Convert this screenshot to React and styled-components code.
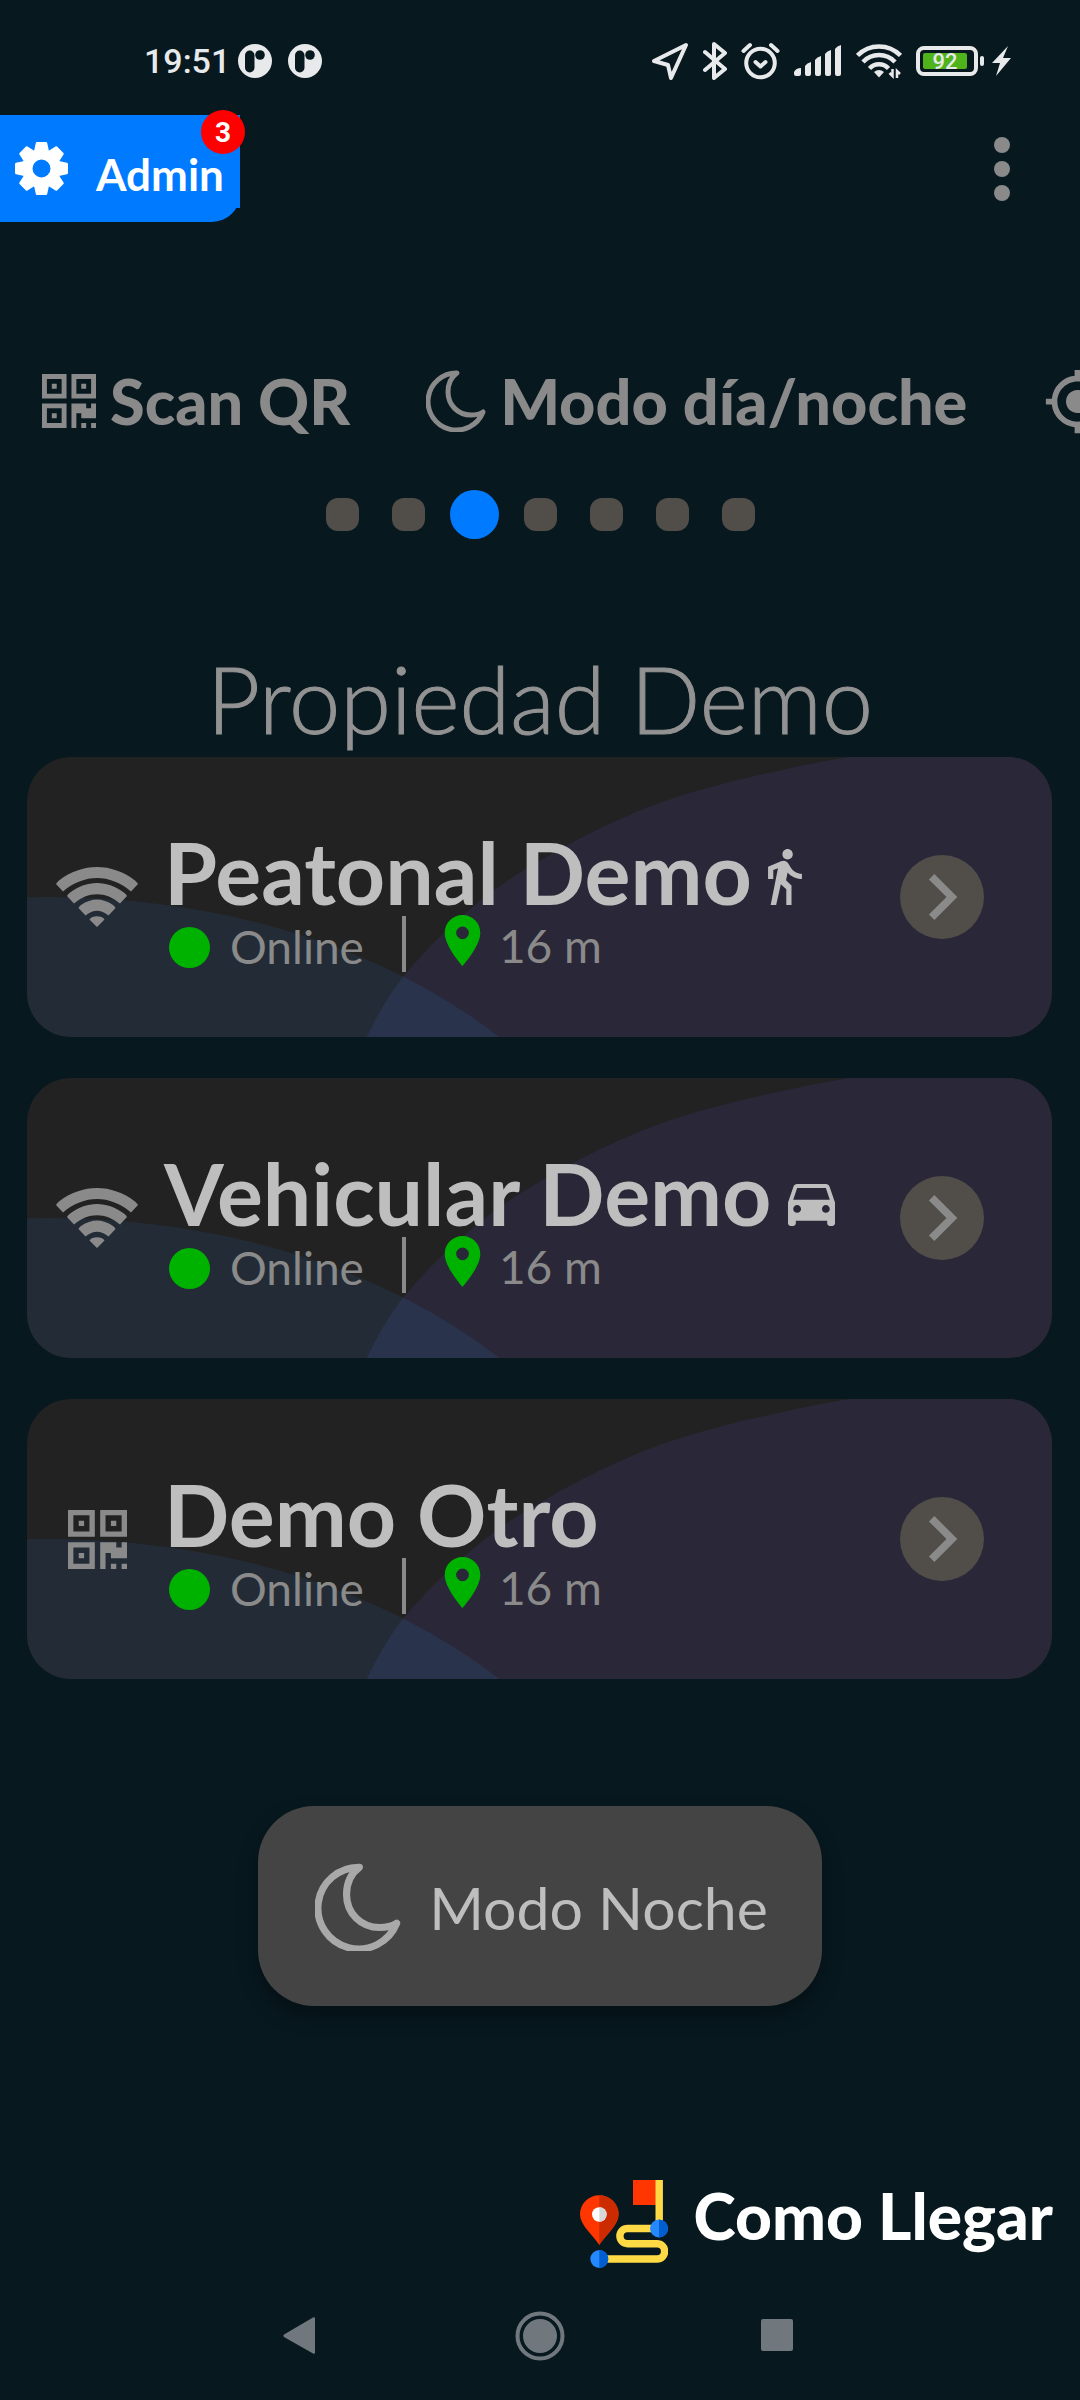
import { useState } from 'react';
import styled, { createGlobalStyle } from 'styled-components';
import {
  MdChevronRight,
  MdDirectionsCar,
  MdDirectionsWalk,
  MdLocationOn,
  MdMyLocation,
} from 'react-icons/md';

const GlobalStyle = createGlobalStyle`
  * {
    box-sizing: border-box;
  }
  body {
    margin: 0;
    background: #07181f;
    font-family: Lato, 'Open Sans', sans-serif;
  }
  button {
    padding: 0;
    border: none;
    background: none;
    color: inherit;
    font: inherit;
    cursor: pointer;
  }
  svg {
    display: block;
    flex: none;
  }
`;

const Page = styled.div`
  display: flex;
  flex-direction: column;
  min-height: 100vh;
  overflow: hidden;
  color: #8a8a8a;
`;

/* status bar */
const StatusBar = styled.div`
  display: flex;
  align-items: center;
  justify-content: space-between;
  height: 115px;
  padding: 6px 69px 0 144px;
  color: #e8e9ea;
  font-family: Roboto, sans-serif;
`;

const StatusGroup = styled.div`
  display: flex;
  align-items: center;
  gap: ${({ $gap }) => $gap}px;
`;

const Clock = styled.time`
  font-size: 34px;
  font-weight: 500;
`;

const Battery = styled.div`
  display: flex;
  align-items: center;
  gap: 2px;
`;

const BatteryBody = styled.div`
  width: 62px;
  height: 30px;
  padding: 3px;
  border: 4px solid #e8e9ea;
  border-radius: 8px;
`;

const BatteryLevel = styled.div`
  height: 16px;
  border-radius: 2px;
  background: #4fb31b;
  font-size: 22px;
  font-weight: 500;
  line-height: 18px;
  text-align: center;
`;

const BatteryTip = styled.span`
  width: 4px;
  height: 10px;
  margin-right: 6px;
  border-radius: 2px;
  background: #e8e9ea;
`;

/* header */
const Header = styled.header`
  display: flex;
  align-items: center;
  justify-content: space-between;
  padding-right: 70px;
`;

const AdminButton = styled.button`
  position: relative;
  display: flex;
  align-items: center;
  gap: 28px;
  width: 240px;
  height: 107px;
  padding: 0 14px 0 15px;
  border-radius: 0 0 28px 0;
  background: #007bff;
  color: #fff;
  font-size: 44px;
  font-weight: 700;

  &::after {
    content: '';
    position: absolute;
    right: 0;
    bottom: 14px;
    width: 10px;
    height: 20px;
    background: #007bff;
  }
`;

const AdminLabel = styled.span`
  padding-top: 10px;
`;

const Badge = styled.span`
  position: absolute;
  top: -5px;
  right: -5px;
  width: 44px;
  height: 44px;
  border-radius: 50%;
  background: #ff0000;
  font-family: Roboto, sans-serif;
  font-size: 28px;
  line-height: 46px;
  text-align: center;
`;

const MoreButton = styled.button`
  display: flex;
  flex-direction: column;
  gap: 8px;

  span {
    width: 16px;
    height: 16px;
    border-radius: 50%;
    background: #8a8a8a;
  }
`;

/* shortcuts */
const Shortcuts = styled.nav`
  display: flex;
  gap: 76px;
  height: 80px;
  margin-top: 139px;
  padding-left: 42px;
  overflow: hidden;
`;

const Shortcut = styled.button`
  display: flex;
  flex: none;
  align-items: center;
  gap: 14px;
  font-size: 63px;
  font-weight: 900;
  line-height: 80px;
  white-space: nowrap;
`;

const Pager = styled.div`
  display: flex;
  align-items: center;
  justify-content: center;
  gap: 33px;
  height: 49px;
  margin-top: 49px;
`;

const PagerDot = styled.button`
  width: ${({ $active }) => ($active ? 49 : 33)}px;
  height: ${({ $active }) => ($active ? 49 : 33)}px;
  margin: 0 ${({ $active }) => ($active ? -8 : 0)}px;
  border-radius: ${({ $active }) => ($active ? '50%' : '12px')};
  background: ${({ $active }) => ($active ? '#007bff' : '#514e49')};
`;

/* property */
const Title = styled.h1`
  margin: 105px 0 3px;
  color: #929292;
  font-size: 92px;
  font-weight: 300;
  line-height: 110px;
  text-align: center;
  -webkit-text-stroke: 1px #929292;
`;

const CardList = styled.ul`
  display: flex;
  flex-direction: column;
  gap: 41px;
  margin: 0;
  padding: 0 28px 0 27px;
  list-style: none;
`;

const Card = styled.li`
  position: relative;
  display: flex;
  align-items: center;
  height: 280px;
  padding: 0 68px 0 27px;
  border-radius: 44px;
  background: #222;
  overflow: hidden;
`;

const CardBackdrop = styled.svg`
  position: absolute;
  inset: 0;
  width: 100%;
  height: 100%;
`;

const CardIcon = styled.div`
  position: relative;
  display: flex;
  justify-content: center;
  width: 86px;
`;

const CardBody = styled.div`
  position: relative;
  flex: 1;
  padding: 6px 0 0 24px;
`;

const CardTitle = styled.h2`
  display: flex;
  align-items: baseline;
  gap: 16px;
  margin: 0;
  color: #bebebe;
  font-size: 86px;
  font-weight: 700;
  line-height: 86px;
  white-space: nowrap;
`;

const TypeIcon = styled.span`
  svg {
    width: ${({ $width }) => $width}px;
    height: ${({ $height }) => $height}px;
  }
`;

const Meta = styled.div`
  display: flex;
  align-items: center;
  height: 56px;
  margin-top: 1px;
  padding-left: 5px;
  font-size: 46px;
  line-height: 46px;
`;

const OnlineState = styled.span`
  display: flex;
  align-items: center;
  gap: 20px;
  padding-top: 7px;

  &::before {
    content: '';
    width: 41px;
    height: 41px;
    border-radius: 50%;
    background: #00b200;
  }
`;

const Distance = styled.span`
  display: flex;
  align-items: center;
  gap: 6px;
  height: 56px;
  margin-left: 38px;
  padding: 4px 0 0 26px;
  border-left: 4px solid #8a8a8a;

  svg {
    margin-bottom: 10px;
    color: #00b200;
  }
`;

const GoButton = styled.button`
  position: relative;
  display: flex;
  align-items: center;
  justify-content: center;
  width: 84px;
  height: 84px;
  border-radius: 50%;
  background: #514e49;
`;

const NightButton = styled.button`
  display: flex;
  align-items: center;
  align-self: center;
  gap: 28px;
  height: 200px;
  margin-top: 127px;
  padding: 2px 54px 0 57px;
  border-radius: 56px;
  background: #444;
  box-shadow: 0 10px 20px rgba(0, 0, 0, 0.3);
  color: #bebebe;
  font-size: 59px;

  svg {
    color: #a9a9a9;
  }
`;

const RouteLink = styled.a`
  display: flex;
  align-items: flex-start;
  align-self: flex-end;
  gap: 26px;
  margin: 174px 27px 0 0;
  color: #fff;
  font-size: 64px;
  font-weight: 900;
  line-height: 72px;
  text-decoration: none;
`;

const SystemNav = styled.nav`
  display: flex;
  justify-content: center;
  gap: 188px;
  margin-top: 43px;
  padding-bottom: 38px;
  color: #70787d;
`;

const NotificationIcon = () => (
  <svg width="34" height="34" viewBox="0 0 34 34">
    <circle cx="17" cy="17" r="17" fill="#e8e9ea" />
    <rect x="7" y="6.5" width="9.500" height="22" rx="4.700" fill="#07181f" />
    <circle cx="22" cy="11" r="4.800" fill="#07181f" />
  </svg>
);

const NavigationIcon = () => (
  <svg width="38" height="38" viewBox="0 0 38 38" fill="none" stroke="currentColor" strokeWidth="4" strokeLinejoin="round">
    <path d="M35 3 3 19l14 4 3 13z" />
  </svg>
);

const BluetoothIcon = () => (
  <svg width="24" height="38" viewBox="0 0 24 38" fill="none" stroke="currentColor" strokeWidth="4" strokeLinejoin="round" strokeLinecap="round">
    <path d="M2 10 22 27 11 36V2l11 9L2 28" />
  </svg>
);

const AlarmIcon = () => (
  <svg width="39" height="38" viewBox="0 0 39 38" fill="none" stroke="currentColor" strokeWidth="4" strokeLinecap="round">
    <circle cx="19.5" cy="21" r="14.3" />
    <path d="m14.5 20 5 4.500 5-4.500" strokeLinejoin="round" />
    <path d="M2.500 9 9 3M36.500 9 30 3" />
  </svg>
);

const SignalIcon = () => (
  <svg width="48" height="32" viewBox="0 0 48 32" fill="currentColor">
    <path d="M0 27q2-4 7-4v6q0 2-2 2H2q-2 0-2-2zM11 21q2-3 6-4v12q0 2-2 2h-2q-2 0-2-2zM21 15q2-3 6-4v18q0 2-2 2h-2q-2 0-2-2zM31 9q2-3 6-4v24q0 2-2 2h-2q-2 0-2-2zM41 4q2-3 6-4v29q0 2-2 2h-2q-2 0-2-2z" />
  </svg>
);

const StatusWifiIcon = () => (
  <svg width="46" height="36" viewBox="0 0 46 36" fill="none" stroke="currentColor" strokeWidth="4.500">
    <path d="M1.500 12.500a30 30 0 0 1 43 0M7 19a22 22 0 0 1 32 0M13.500 25.500a13 13 0 0 1 19 0" />
    <path d="M18 29q5-4 10 0l-5 5.500z" fill="currentColor" stroke="none" />
    <path d="M36.500 26v7l-3-3M41 35v-7l3 3" strokeWidth="2.500" />
  </svg>
);

const BoltIcon = () => (
  <svg width="19" height="30" viewBox="0 0 19 30" fill="currentColor">
    <path d="M16 0 0 17h8L4 30 19 12h-8z" />
  </svg>
);

const GearIcon = () => (
  <svg width="53" height="53" viewBox="-26.500 -26.500 53 53">
    {[0, 45, 90, 135, 180, 225, 270, 315].map((angle) => (
      <path key={angle} d="M-4.500-26.500h9q1 0 1.200 1L8-15H-8L-5.700-25.500q.2-1 1.200-1z" fill="currentColor" transform={`rotate(${angle})`} />
    ))}
    <circle r="14" fill="none" stroke="currentColor" strokeWidth="10" />
  </svg>
);

const QrIcon = ({ size }) => (
  <svg width={size} height={size} viewBox="0 0 11 11" fill="currentColor" fillRule="evenodd">
    <path d="M0 0h5v5H0zM1 1v3h3V1zM2 2h1v1H2zM6 0h5v5H6zM7 1v3h3V1zM8 2h1v1H8zM0 6h5v5H0zM1 7v3h3V7zM2 8h1v1H2z" />
    <path d="M6 6h3v1h1V6h1v3H8V8H7v3H6zM8 10h1v1H8zM10 10h1v1h-1z" />
  </svg>
);

const MoonIcon = ({ width }) => (
  <svg width={width} viewBox="0 0 60 62" fill="none" stroke="currentColor" strokeWidth="5" strokeLinejoin="round">
    <path d="M31 3C24 8 22 15 22 22c0 13 10 23 23 23 4 0 8-.500 12-3A28.500 28.500 0 1 1 31 3z" />
  </svg>
);

const WifiIcon = () => (
  <svg width="82" height="60" viewBox="0 0 82 60" fill="currentColor">
    <path d="M0 17Q1 15 3 13.500C26-4.500 56-4.500 79 13.500q2 1.500 3 3.500l-7 7.500C54 6.500 28 6.500 7 24.500zM11 29q1-2 2.500-3C30 12.500 52 12.500 68.500 26q1.500 1 2.500 3l-7 7.500C50 24 32 24 18 36.500zM22.500 41q1-2 2.500-3 16-11 32 0 1.500 1 2.500 3l-7 7.500q-11.500-9.500-23 0zM33.500 52.500q1-2 3-2.500 4.500-1.500 9 0 2 .500 3 2.500L41 60z" />
  </svg>
);

const RouteIcon = () => (
  <svg width="88" height="88" viewBox="0 0 88 88">
    <path d="M53 0h23v25H53z" fill="#ff3600" />
    <path d="M79.200 0v48.500H47.500a7.600 7.600 0 0 0 0 15.200H77a7.600 7.600 0 0 1 0 15.300H19" fill="none" stroke="#ffda45" strokeWidth="7.400" />
    <circle cx="79" cy="48.500" r="9" fill="#2488ff" />
    <path d="M79 39.500a9 9 0 0 1 0 18z" fill="#005ed0" />
    <circle cx="19.300" cy="79" r="9" fill="#2488ff" />
    <path d="M19.300 70a9 9 0 0 1 0 18z" fill="#005ed0" />
    <path d="M19.300 65C13 55 0 45 0 34.500a19.300 19.300 0 0 1 38.600 0C38.600 45 25.600 55 19.300 65z" fill="#ff3600" />
    <path d="M19.300 65V15.200a19.300 19.300 0 0 1 19.300 19.300C38.600 45 25.600 55 19.300 65z" fill="#cc2b00" />
    <circle cx="19.300" cy="34.500" r="7.300" fill="#fff" />
    <path d="M19.300 27.200a7.300 7.300 0 0 1 0 14.600z" fill="#d8d8d8" />
  </svg>
);

const WalkType = () => (
  <TypeIcon $width={34} $height={56}>
    <MdDirectionsWalk viewBox="6 1.5 13 21.5" />
  </TypeIcon>
);

const CarType = () => (
  <TypeIcon $width={47} $height={42}>
    <MdDirectionsCar viewBox="3 5 18 16" />
  </TypeIcon>
);

const batteryPercent = 92;

const doors = [
  { id: 1, name: 'Peatonal Demo', distance: '16 m', icon: <WifiIcon />, typeIcon: <WalkType /> },
  { id: 2, name: 'Vehicular Demo', distance: '16 m', icon: <WifiIcon />, typeIcon: <CarType /> },
  { id: 3, name: 'Demo Otro', distance: '16 m', icon: <QrIcon size={59} />, typeIcon: null },
];

const pages = [0, 1, 2, 3, 4, 5, 6];

function DoorCard({ door }) {
  return (
    <Card>
      <CardBackdrop viewBox="0 0 1026 280" preserveAspectRatio="none" aria-hidden="true">
        <defs>
          <clipPath id={`hill-${door.id}`}>
            <ellipse cx="23" cy="554" rx="600" ry="414" />
          </clipPath>
        </defs>
        <ellipse cx="23" cy="554" rx="600" ry="414" fill="#232c36" />
        <path d="M340 280Q356 246 376 220C413 176 460 133 513 104 552 81 592 61 633 46 670 33 709 23 747 15Q785 6 823 0H1026V280z" fill="#2a2838" />
        <path
          d="M340 280Q356 246 376 220C413 176 460 133 513 104V280z"
          fill="#29334b"
          clipPath={`url(#hill-${door.id})`}
        />
      </CardBackdrop>
      <CardIcon>{door.icon}</CardIcon>
      <CardBody>
        <CardTitle>
          {door.name}
          {door.typeIcon}
        </CardTitle>
        <Meta>
          <OnlineState>Online</OnlineState>
          <Distance>
            <MdLocationOn size={61} />
            {door.distance}
          </Distance>
        </Meta>
      </CardBody>
      <GoButton aria-label={`Abrir ${door.name}`}>
        <MdChevronRight size={92} />
      </GoButton>
    </Card>
  );
}

function App() {
  const [page, setPage] = useState(2);

  return (
    <Page>
      <GlobalStyle />
      <StatusBar>
        <StatusGroup $gap={8}>
          <Clock>19:51</Clock>
          <StatusGroup $gap={16}>
            <NotificationIcon />
            <NotificationIcon />
          </StatusGroup>
        </StatusGroup>
        <StatusGroup $gap={14}>
          <NavigationIcon />
          <BluetoothIcon />
          <AlarmIcon />
          <SignalIcon />
          <StatusWifiIcon />
          <Battery>
            <BatteryBody>
              <BatteryLevel style={{ width: `${batteryPercent}%` }}>{batteryPercent}</BatteryLevel>
            </BatteryBody>
            <BatteryTip />
            <BoltIcon />
          </Battery>
        </StatusGroup>
      </StatusBar>

      <Header>
        <AdminButton>
          <GearIcon />
          <AdminLabel>Admin</AdminLabel>
          <Badge>3</Badge>
        </AdminButton>
        <MoreButton aria-label="Más opciones">
          <span />
          <span />
          <span />
        </MoreButton>
      </Header>

      <Shortcuts>
        <Shortcut>
          <QrIcon size={54} />
          Scan QR
        </Shortcut>
        <Shortcut>
          <MoonIcon width={60} />
          Modo día/noche
        </Shortcut>
        <Shortcut aria-label="Mi ubicación">
          <MdMyLocation size={69} />
        </Shortcut>
      </Shortcuts>

      <Pager>
        {pages.map((item) => (
          <PagerDot
            key={item}
            $active={item === page}
            aria-label={`Página ${item + 1}`}
            onClick={() => setPage(item)}
          />
        ))}
      </Pager>

      <Title>Propiedad Demo</Title>
      <CardList>
        {doors.map((door) => (
          <DoorCard key={door.id} door={door} />
        ))}
      </CardList>

      <NightButton>
        <MoonIcon width={86} />
        Modo Noche
      </NightButton>

      <RouteLink href="#como-llegar">
        <RouteIcon />
        Como Llegar
      </RouteLink>

      <SystemNav>
        <button aria-label="Atrás">
          <svg width="50" height="50" viewBox="0 0 50 50" fill="currentColor">
            <path d="M7 23.500 36 6.500q2-1 2 1v34q0 2-2 1L7 26q-1.500-1.200 0-2.500z" />
          </svg>
        </button>
        <button aria-label="Inicio">
          <svg width="50" height="50" viewBox="0 0 50 50">
            <circle cx="25" cy="25" r="22.500" fill="none" stroke="currentColor" strokeWidth="4" />
            <circle cx="25" cy="25" r="17" fill="currentColor" />
          </svg>
        </button>
        <button aria-label="Recientes">
          <svg width="50" height="50" viewBox="0 0 50 50">
            <rect x="8" y="8" width="32" height="32" rx="2" fill="currentColor" />
          </svg>
        </button>
      </SystemNav>
    </Page>
  );
}

export default App;
